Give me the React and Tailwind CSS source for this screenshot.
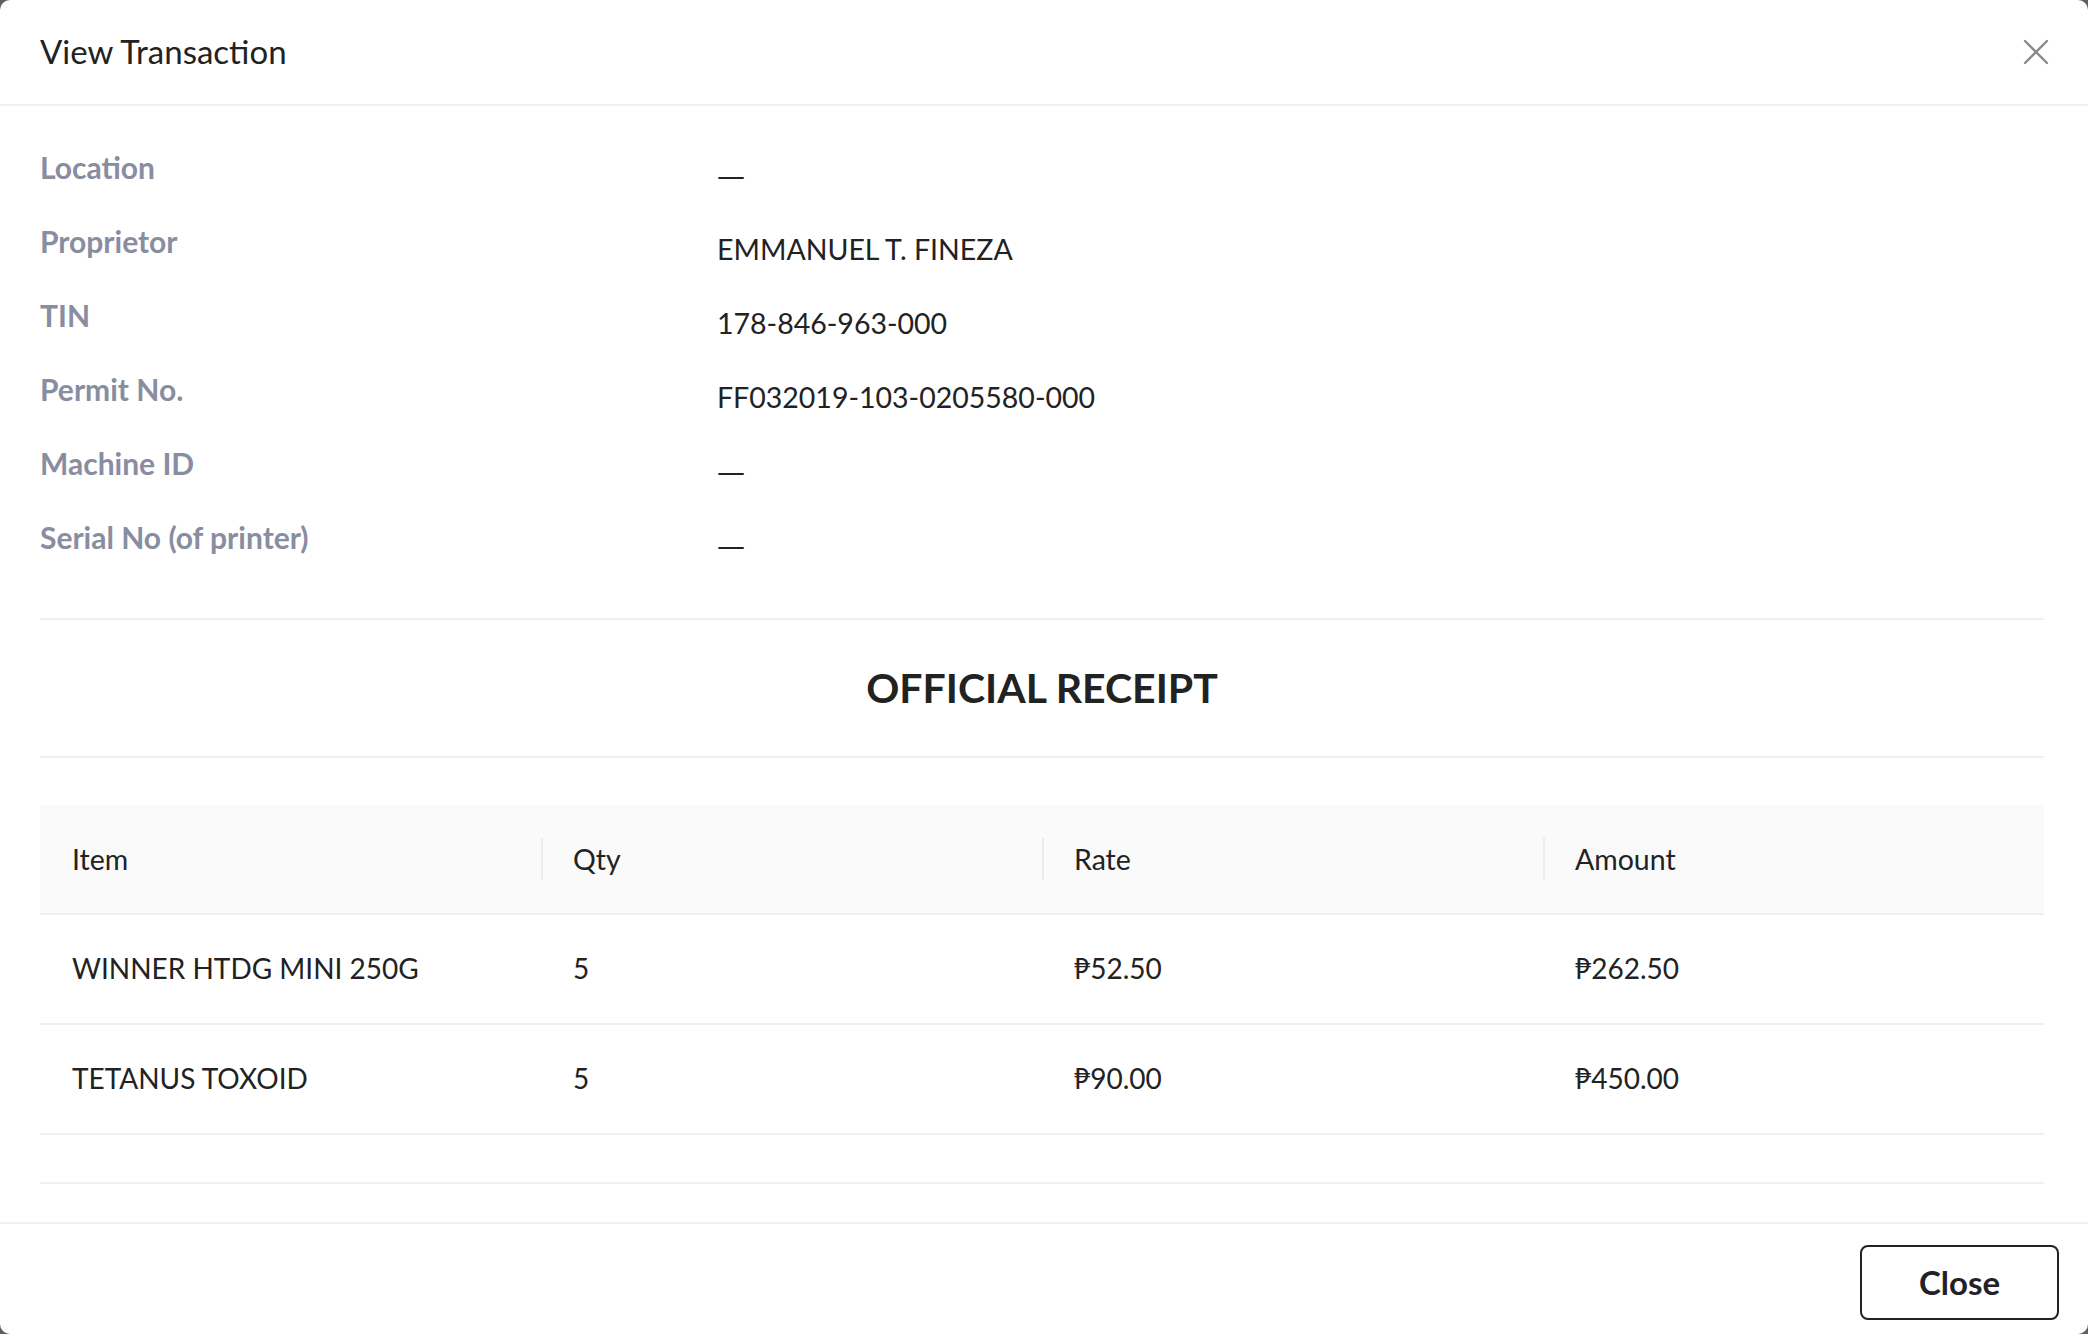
import { X } from 'lucide-react';

const details = [
  { label: 'Location', value: '—' },
  { label: 'Proprietor', value: 'EMMANUEL T. FINEZA' },
  { label: 'TIN', value: '178-846-963-000' },
  { label: 'Permit No.', value: 'FF032019-103-0205580-000' },
  { label: 'Machine ID', value: '—' },
  { label: 'Serial No (of printer)', value: '—' }
];

const items = [
  { name: 'WINNER HTDG MINI 250G', qty: 5, rate: '₱52.50', amount: '₱262.50' },
  { name: 'TETANUS TOXOID', qty: 5, rate: '₱90.00', amount: '₱450.00' }
];

const columns = ['Item', 'Qty', 'Rate', 'Amount'];

export default function App() {
  return (
    <div
      className="min-h-screen bg-[#5f5f5f] text-[#222222]"
      style={{ fontFamily: 'Lato, "Noto Sans", "DejaVu Sans", sans-serif' }}
    >
      <div className="bg-white rounded-[10px] h-[1334px] flex flex-col overflow-hidden">
        {/* Header */}
        <div className="h-[106px] shrink-0 flex items-center justify-between pl-[40px] pr-[30px] border-b-2 border-[#f0f0f0]">
          <h1 className="text-[33px] font-normal">View Transaction</h1>
          <X className="w-[44px] h-[44px] text-[#8a8a8a]" strokeWidth={1.3} />
        </div>

        {/* Body */}
        <div className="flex-1 pl-[40px] pr-[44px]">
          <div className="pt-[40px] pb-[28px]">
            {details.map(row => (
              <div key={row.label} className="flex h-[74px]">
                <div className="w-[677px] shrink-0 text-[30px] leading-[42px] font-bold text-[#888da0]">
                  {row.label}
                </div>
                <div className="pt-[8px] text-[28.5px] leading-[42px]">
                  {row.value === '—' ? (
                    <span style={{ fontFamily: '"DejaVu Sans", sans-serif' }} className="text-[28px]">
                      —
                    </span>
                  ) : (
                    row.value
                  )}
                </div>
              </div>
            ))}
          </div>

          <div className="border-t-2 border-[#f0f0f0] h-[138px] flex items-center justify-center">
            <h2 className="text-[41px] font-bold">OFFICIAL RECEIPT</h2>
          </div>

          <div className="border-t-2 border-[#f0f0f0] pt-[47px]">
            <div className="grid grid-cols-4 h-[110px] bg-[#fafafa] border-b-2 border-[#f0f0f0]">
              {columns.map((col, idx) => (
                <div key={col} className="flex items-center">
                  {idx > 0 && <div className="w-[2px] h-[42px] bg-[#ececec]" />}
                  <span className={`text-[28.5px] ${idx > 0 ? 'ml-[30px]' : 'ml-[32px]'}`}>{col}</span>
                </div>
              ))}
            </div>
            {items.map(item => (
              <div
                key={item.name}
                className="grid grid-cols-4 h-[110px] border-b-2 border-[#f0f0f0] text-[28px] pb-[3px]"
              >
                <div className="flex items-center pl-[32px]">{item.name}</div>
                <div className="flex items-center pl-[32px]">{item.qty}</div>
                <div className="flex items-center pl-[32px]">{item.rate}</div>
                <div className="flex items-center pl-[32px]">{item.amount}</div>
              </div>
            ))}
            <div className="h-[49px] border-b-2 border-[#f0f0f0]" />
          </div>
        </div>

        {/* Footer */}
        <div className="h-[112px] shrink-0 border-t-2 border-[#f0f0f0] flex justify-end pt-[21px] pr-[29px]">
          <button className="w-[199px] h-[75px] rounded-[8px] border-2 border-[#1f2229] text-[33px] font-bold text-[#1f2229]">
            Close
          </button>
        </div>
      </div>
    </div>
  );
}
